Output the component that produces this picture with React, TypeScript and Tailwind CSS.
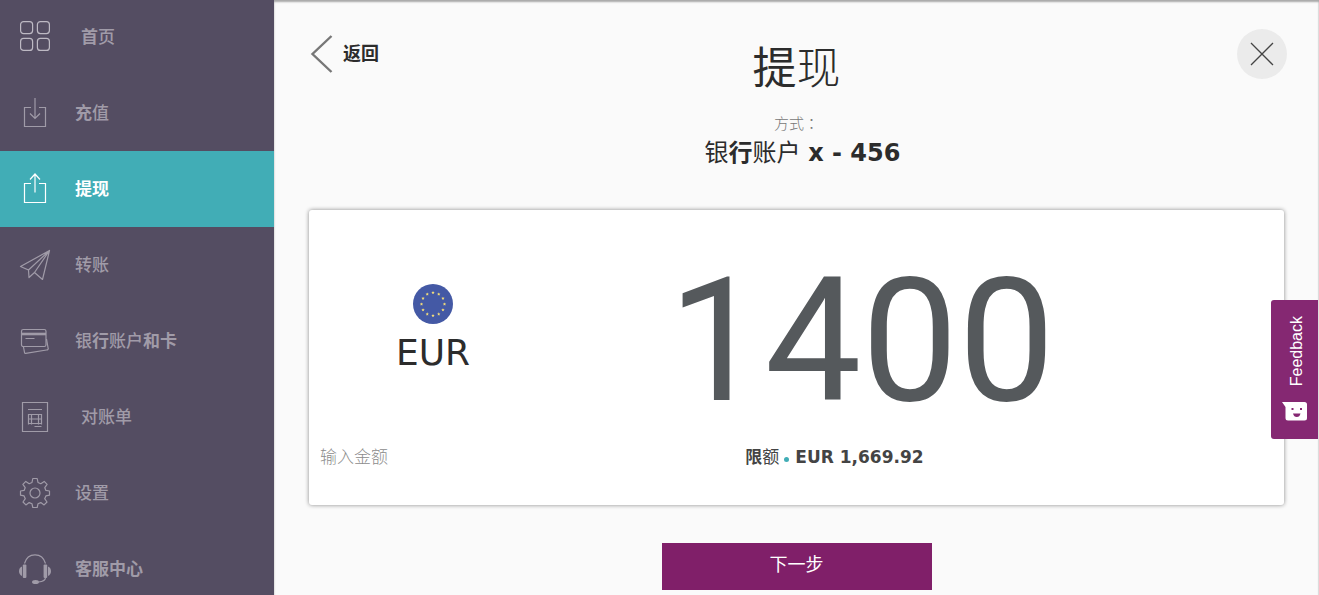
import React, { useState } from "react";

type NavItem = {
  id: string;
  label: React.ReactNode;
  icon: React.ReactNode;
  indent?: boolean;
};

const Icon: React.FC<{ children: React.ReactNode }> = ({ children }) => (
  <svg
    width="30"
    height="30"
    viewBox="0 0 30 30"
    fill="none"
    stroke="currentColor"
    strokeWidth={1.2}
    className="shrink-0 overflow-visible"
    aria-hidden="true"
  >
    {children}
  </svg>
);

const NAV_ITEMS: NavItem[] = [
  {
    id: "home",
    indent: true,
    label: (
      <>
        <b>首</b>页
      </>
    ),
    icon: (
      <Icon>
        <g stroke="#bdb9c3">
          <rect x="0.6" y="-0.4" width="12" height="12" rx="3" />
          <rect x="17.4" y="-0.4" width="12" height="12" rx="3" />
          <rect x="0.6" y="16.4" width="12" height="12" rx="3" />
          <rect x="17.4" y="16.4" width="12" height="12" rx="3" />
        </g>
      </Icon>
    ),
  },
  {
    id: "deposit",
    label: (
      <>
        <b>充</b>值
      </>
    ),
    icon: (
      <Icon>
        <path d="M11 9.5H4.5v19h21v-19H19M15 0v20.5M10 15.5l5 5 5-5" />
      </Icon>
    ),
  },
  {
    id: "withdraw",
    label: <b>提现</b>,
    icon: (
      <Icon>
        <path d="M11 9.5H4.5v19h21v-19H19M15 18.5V0M10 5.500l5-5.500 5 5.500" />
      </Icon>
    ),
  },
  {
    id: "transfer",
    label: "转账",
    icon: (
      <Icon>
        <path
          strokeLinejoin="round"
          d="M29.5.5.5 16.500l8 3.500L29.5.5 22.5 29.500l-8-7M29.5.5l-15 22-5.500 5-.5-7.500"
        />
      </Icon>
    ),
  },
  {
    id: "accounts",
    label: (
      <>
        银<b>行</b>账户<b>和卡</b>
      </>
    ),
    icon: (
      <Icon>
        <rect x="1.500" y="3.500" width="24.500" height="17" rx="1.800" />
        <path d="M1.500 8h24.500" strokeWidth="2.600" />
        <path d="M5.500 12.500h9M3.500 21l1 5.500q.2 1 1.200.8L26.500 24q2-.3 1.700-1.500L26.500 13" />
      </Icon>
    ),
  },
  {
    id: "statement",
    indent: true,
    label: "对账单",
    icon: (
      <Icon>
        <path d="M2.500.5h25v29h-25zM8 7.500h14M14.500 24.500h7" />
        <path d="M8.500 12v10.500M21.500 12v10.500M8 12.500h14M8 17h14M8 21.500h14M11.500 12v10.500M18.500 12v10.500" />
      </Icon>
    ),
  },
  {
    id: "settings",
    label: "设置",
    icon: (
      <Icon>
        <circle cx="15" cy="15" r="5" />
        <path
          strokeLinejoin="round"
          d="M12.800.5h4.400l.8 4 2.800 1.200 3.400-2.300 2.900 2.900-2.300 3.400 1.100 2.700 3.600.6v4.200l-3.600.7-1.200 2.800 2.300 3.300-2.900 2.900-3.300-2.300-2.800 1.200-.8 3.700h-4.400l-.8-3.700-2.800-1.200-3.300 2.300-2.900-2.900 2.300-3.300-1.200-2.800-3.600-.7v-4.200l3.600-.6 1.100-2.700-2.300-3.400 2.900-2.900 3.400 2.300 2.800-1.200z"
        />
      </Icon>
    ),
  },
  {
    id: "support",
    label: <b>客服中心</b>,
    icon: (
      <Icon>
        <path d="M4.500 9.500C6 4 10 .8 15 .8S24 4 25.500 9.500M25.500 23.500c0 3-2 4-7 4.500" />
        <g fill="currentColor" stroke="none">
          <rect x="2.800" y="10.500" width="3.600" height="13.500" rx="1" />
          <rect x="23.600" y="10.500" width="3.600" height="13.500" rx="1" />
          <path d="M2 12.500v9.500Q-1 20.500-1 17.200T2 12.500zM28 12.500v9.500q3-1.500 3-4.800t-3-4.700z" />
          <ellipse cx="15.500" cy="28" rx="3.500" ry="2" />
        </g>
      </Icon>
    ),
  },
];

const STAR_ANGLES = Array.from({ length: 12 }, (_, i) => (i * Math.PI) / 6);

const EuroFlag: React.FC = () => (
  <svg width="40" height="40" viewBox="0 0 40 40" aria-hidden="true">
    <circle cx="20" cy="20" r="20" fill="#4459a5" />
    {STAR_ANGLES.map((a) => (
      <path
        key={a}
        transform={`translate(${20 + 11.5 * Math.sin(a)} ${20 - 11.5 * Math.cos(a)})`}
        d="M0-1.600.5-.5 1.600-.4.8.4 1 1.500 0 1-1 1.500-.8.4-1.600-.4-.5-.5z"
        fill="#f2dc7a"
      />
    ))}
  </svg>
);

const Sidebar: React.FC<{ active: string; onSelect: (id: string) => void }> = ({
  active,
  onSelect,
}) => (
  <nav className="w-[274px] shrink-0 overflow-hidden bg-[#544d62]">
    <ul className="-mt-px">
      {NAV_ITEMS.map((item) => (
        <li key={item.id}>
          <a
            href={`#${item.id}`}
            onClick={() => onSelect(item.id)}
            className={`flex h-[76px] items-center pl-5 text-[17px] leading-6 font-medium ${
              item.id === active ? "bg-[#41adb6] text-white" : "text-[#a09ba8]"
            }`}
          >
            {item.icon}
            <span className={item.indent ? "pl-[31px]" : "pl-[25px]"}>{item.label}</span>
          </a>
        </li>
      ))}
    </ul>
  </nav>
);

export default function App() {
  const [active, setActive] = useState("withdraw");
  const [amount, setAmount] = useState("1400");

  return (
    <div className="flex h-screen overflow-hidden bg-[#fafafa] font-['DejaVu_Sans','Noto_Sans_CJK_SC',sans-serif] text-[#2c2c2c]">
      <Sidebar active={active} onSelect={setActive} />

      <main className="min-w-0 flex-1 shadow-[inset_0_2px_2px_#a8a8a8,inset_-1px_0_0_#efefef]">
        <header className="grid grid-cols-[1fr_auto_1fr] items-start px-8 pt-[29px]">
          <a href="#back" className="flex h-[50px] items-center gap-2.5 pl-1 text-lg font-bold">
            <svg width="23" height="38" viewBox="0 0 23 38" fill="none" aria-hidden="true">
              <path d="M21.500 1 2.500 19l19 18" stroke="#777" strokeWidth="2.400" />
            </svg>
            返回
          </a>
          <div className="text-center">
            <h1 className="mt-2.5 text-[44px] leading-[60px]">
              提<span className="font-light">现</span>
            </h1>
            <p className="mt-3.5 text-[15px] leading-5 font-light text-[#777]">
              方式<span className="font-['Noto_Sans_CJK_TC',sans-serif]">：</span>
            </p>
            <p className="mt-[3px] pl-3 text-2xl leading-8">
              银<b>行</b>账户 <b>x - 456</b>
            </p>
          </div>
          <button
            type="button"
            aria-label="关闭"
            className="flex size-[50px] items-center justify-center justify-self-end rounded-full bg-[#ebebeb]"
          >
            <svg width="24" height="24" viewBox="0 0 24 24" fill="none" aria-hidden="true">
              <path d="m1 1 22 22M23 1 1 23" stroke="#444" strokeWidth="1.300" />
            </svg>
          </button>
        </header>

        <form onSubmit={(e) => e.preventDefault()} className="px-[35px] pt-[41px]">
          <div className="grid grid-cols-[248px_1fr] rounded-[3px] bg-white pt-10 pb-9 shadow-[0_0_4px_#888]">
            <div className="flex flex-col items-center pt-[34px]">
              <EuroFlag />
              <span className="mt-[5px] text-4xl leading-12">EUR</span>
            </div>
            <div className="pt-[3px] pr-[118px]">
              <input
                id="amount"
                value={amount}
                onChange={(e) => setAmount(e.target.value)}
                className="block h-44 w-full bg-transparent text-center font-[Roboto,sans-serif] text-[172px] leading-[176px] text-[#55595c] outline-none"
              />
            </div>
            <label
              htmlFor="amount"
              className="mt-4 pl-[11px] text-[17px] leading-6 font-light text-[#8c8c8c]"
            >
              输入金额
            </label>
            <p className="mt-4 flex items-center justify-center pr-[172px] text-[17px] leading-6 text-[#444]">
              <b>限</b>额
              <span className="mt-1 mr-1.5 ml-[5px] size-[5px] rounded-full bg-[#41adb6]" />
              <b>EUR 1,669.92</b>
            </p>
          </div>
          <button
            type="submit"
            className="mx-auto mt-[38px] block h-[47px] w-[270px] bg-[#801f69] pb-1 text-lg text-white"
          >
            下一步
          </button>
        </form>
      </main>

      <button
        type="button"
        className="fixed top-[300px] right-px flex h-[139px] w-[47px] flex-col items-center justify-between rounded-l-[3px] bg-[#852872] pt-4 pb-[18px] text-white"
      >
        <span className="rotate-180 pr-1 font-['Liberation_Sans',sans-serif] text-base leading-5 [writing-mode:vertical-rl]">
          Feedback
        </span>
        <svg width="26" height="19" viewBox="0 0 26 19" aria-hidden="true">
          <path d="M0 0h22.500Q25 0 25 2.500v13.500q0 2.500-2.500 2.500H6Q3.500 18.500 3.500 16V5z" fill="#fff" />
          <path d="M9.500 6h2v2h-2zM18 6h2v2h-2zM11 11.500h7.500q-.8 3.500-3.700 3.500T11 11.500z" fill="#852872" />
        </svg>
      </button>
    </div>
  );
}
